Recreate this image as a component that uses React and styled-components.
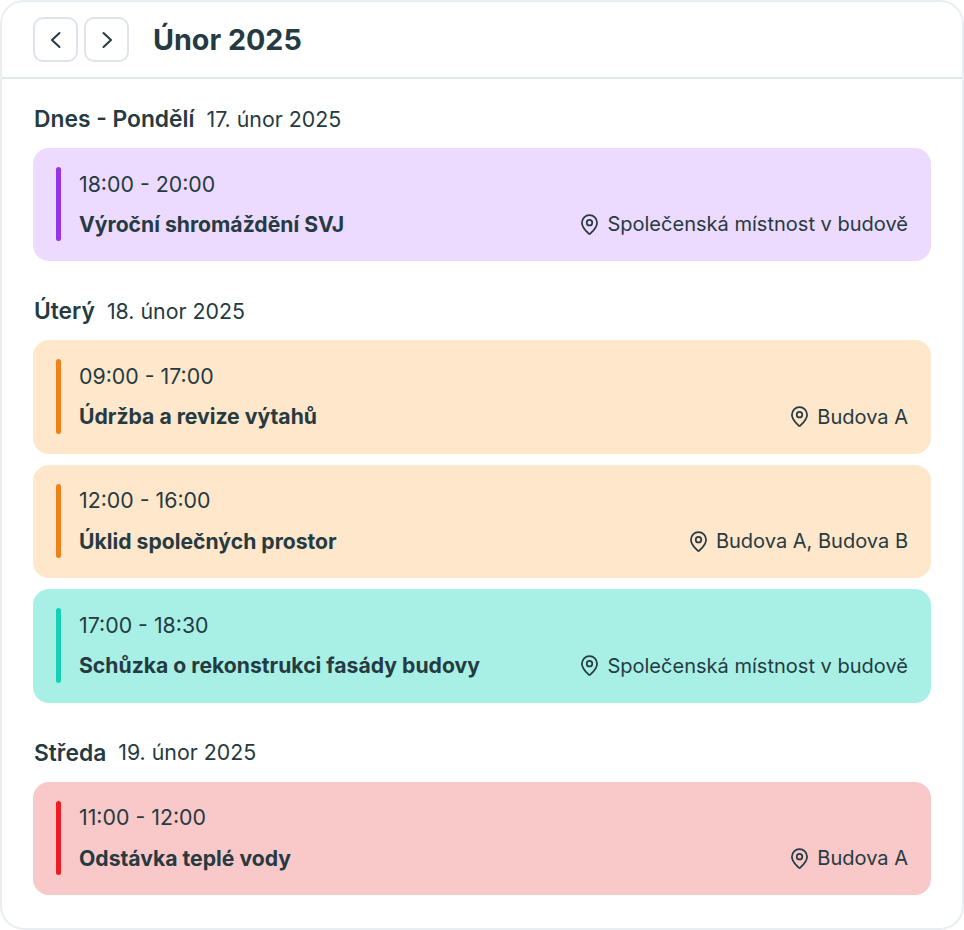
import React from "react";
import styled, { createGlobalStyle } from "styled-components";

const days = [
  {
    name: "Dnes - Pondělí",
    date: "17. únor 2025",
    events: [
      { time: "18:00 - 20:00", title: "Výroční shromáždění SVJ", place: "Společenská místnost v budově", kind: "purple" },
    ],
  },
  {
    name: "Úterý",
    date: "18. únor 2025",
    events: [
      { time: "09:00 - 17:00", title: "Údržba a revize výtahů", place: "Budova A", kind: "orange" },
      { time: "12:00 - 16:00", title: "Úklid společných prostor", place: "Budova A, Budova B", kind: "orange" },
      { time: "17:00 - 18:30", title: "Schůzka o rekonstrukci fasády budovy", place: "Společenská místnost v budově", kind: "teal" },
    ],
  },
  {
    name: "Středa",
    date: "19. únor 2025",
    events: [
      { time: "11:00 - 12:00", title: "Odstávka teplé vody", place: "Budova A", kind: "red" },
    ],
  },
];

const colors = {
  purple: { bg: "#ecdaff", bar: "#9333ea" },
  orange: { bg: "#fee7ca", bar: "#f0801a" },
  teal: { bg: "#a8f0e6", bar: "#14d1b3" },
  red: { bg: "#f9c8c9", bar: "#ee1c25" },
};

const Chevron = ({ d }) => (
  <svg width="24" height="24" viewBox="0 0 24 24" fill="none" stroke="#263a42" strokeWidth="2" strokeLinecap="round" strokeLinejoin="round">
    <path d={d} />
  </svg>
);

const PinIcon = () => (
  <svg width="23" height="23" viewBox="0 0 20 20" fill="none" stroke="#263a42" strokeWidth="1.5" strokeLinejoin="round">
    <path d="M10 18.2c-.3 0-.5-.1-.7-.3C7.6 16.2 3.4 12.6 3.4 8.4a6.6 6.6 0 0 1 13.2 0c0 4.2-4.2 7.8-5.9 9.5-.2.2-.4.3-.7.3Z" />
    <circle cx="10" cy="8.4" r="2.4" />
  </svg>
);

const App = () => {
  return (
    <>
      <GlobalStyle />
      <Page>
        <Header>
          <NavButton aria-label="Předchozí">
            <Chevron d="M15.5 5 L8 12 L15.5 19" />
          </NavButton>
          <NavButton aria-label="Další">
            <Chevron d="M8.5 5 L16 12 L8.5 19" />
          </NavButton>
          <Title>Únor 2025</Title>
        </Header>
        <Content>
          {days.map((day) => (
            <Day key={day.date}>
              <DayHeading>
                <DayName>{day.name}</DayName>
                <DayDate>{day.date}</DayDate>
              </DayHeading>
              <EventList>
                {day.events.map((ev) => (
                  <EventCard key={ev.time} $kind={ev.kind}>
                    <Bar $kind={ev.kind} />
                    <EventBody>
                      <Time>{ev.time}</Time>
                      <EventRow>
                        <EventTitle>{ev.title}</EventTitle>
                        <Place>
                          <PinIcon />
                          {ev.place}
                        </Place>
                      </EventRow>
                    </EventBody>
                  </EventCard>
                ))}
              </EventList>
            </Day>
          ))}
        </Content>
      </Page>
    </>
  );
};

export default App;

const GlobalStyle = createGlobalStyle`
  html, body {
    margin: 0;
    padding: 0;
    background: #ffffff;
  }
  * {
    box-sizing: border-box;
  }
  body {
    font-family: Inter, "Liberation Sans", sans-serif;
    color: #263a42;
  }
`;

const Page = styled.div`
  width: 964px;
  height: 930px;
  background: #ffffff;
  border: 2px solid #e9eef3;
  border-radius: 24px;
  overflow: hidden;
`;

const Header = styled.div`
  height: 77px;
  padding: 15px 31px 0;
  display: flex;
  align-items: flex-start;
  gap: 6px;
  border-bottom: 2px solid #dfe9ec;
`;

const NavButton = styled.button`
  width: 45px;
  height: 45px;
  padding: 0;
  display: flex;
  align-items: center;
  justify-content: center;
  background: #ffffff;
  border: 2px solid #e0e4ea;
  border-radius: 10px;
  color: #263a42;
`;

const Title = styled.h1`
  margin: 0 0 0 18px;
  height: 45px;
  line-height: 45px;
  font-size: 28.7px;
  font-weight: 700;
`;

const Content = styled.div`
  padding: 24px 31px 0;
  display: flex;
  flex-direction: column;
  gap: 34px;
`;

const Day = styled.section`
  display: flex;
  flex-direction: column;
  gap: 14px;
`;

const DayHeading = styled.div`
  display: flex;
  align-items: center;
  gap: 12px;
  height: 31px;
  padding-left: 1px;
`;

const DayName = styled.span`
  font-size: 22.8px;
  font-weight: 600;
`;

const DayDate = styled.span`
  font-size: 21.33px;
  font-weight: 400;
`;

const EventList = styled.div`
  display: flex;
  flex-direction: column;
  gap: 11.2px;
`;

const EventCard = styled.div`
  height: 113.33px;
  padding: 19px 23px 20px;
  display: flex;
  gap: 18px;
  border-radius: 16px;
  background: ${(p) => colors[p.$kind].bg};
`;

const Bar = styled.div`
  width: 5px;
  flex: none;
  border-radius: 3px;
  background: ${(p) => colors[p.$kind].bar};
`;

const EventBody = styled.div`
  flex: 1;
  display: flex;
  flex-direction: column;
  justify-content: space-between;
  padding: 0.5px 0 1.5px;
`;

const Time = styled.div`
  font-size: 21.33px;
  line-height: 32px;
`;

const EventRow = styled.div`
  display: flex;
  justify-content: space-between;
  align-items: center;
  height: 32px;
  line-height: 32px;
`;

const EventTitle = styled.div`
  font-size: 21.17px;
  font-weight: 700;
`;

const Place = styled.div`
  display: flex;
  align-items: center;
  gap: 6px;
  margin-top: 1px;
  font-size: 20.04px;
`;
